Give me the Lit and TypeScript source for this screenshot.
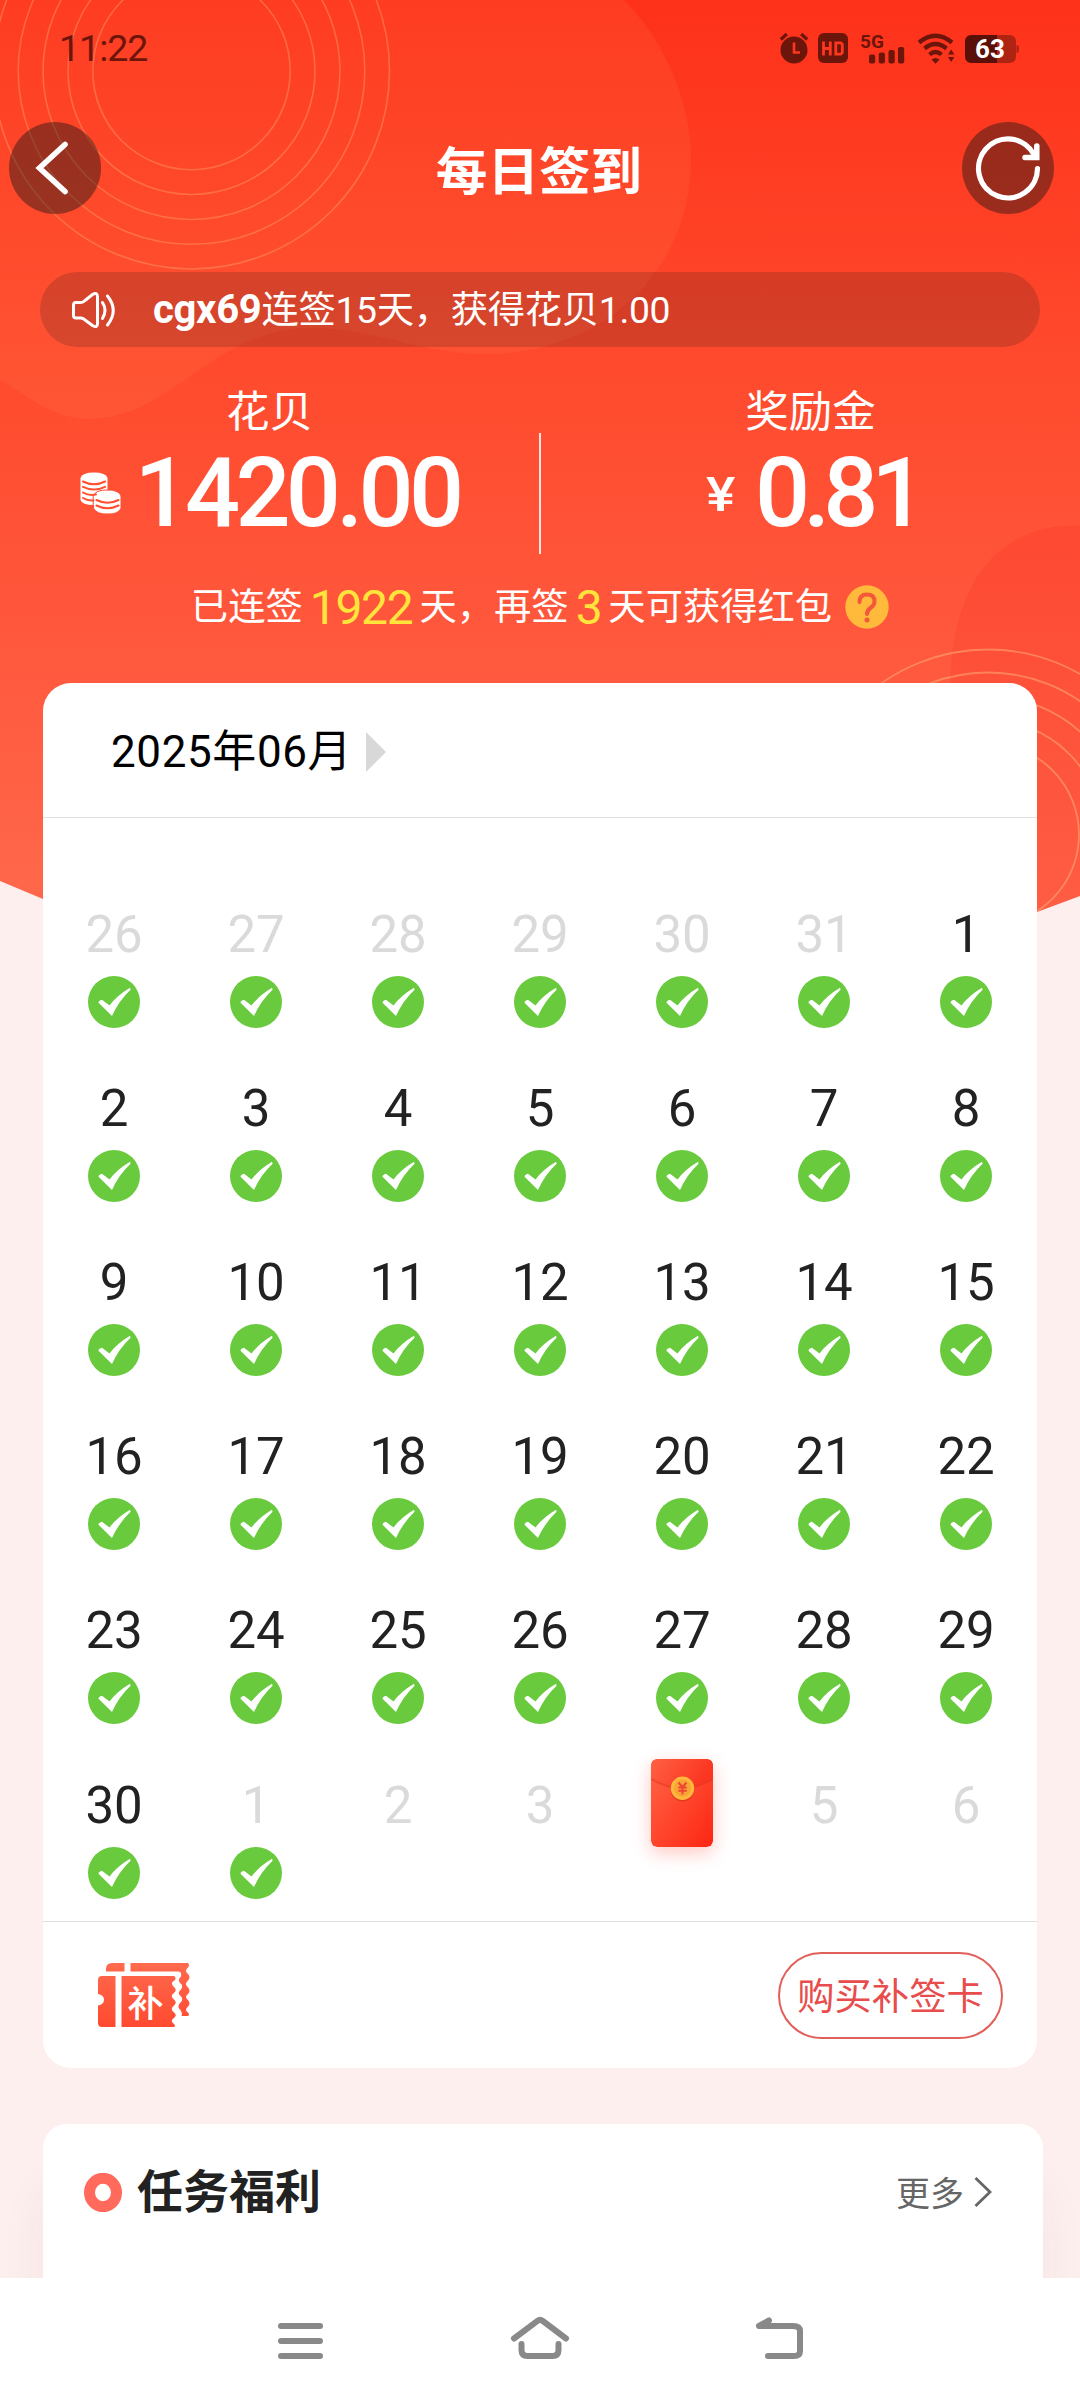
import { LitElement, html, css, svg } from "lit";
import { customElement, property } from "lit/decorators.js";
import { classMap } from "lit/directives/class-map.js";

interface Day {
  n: number;
  muted?: boolean;
  mark: "check" | "packet" | "none";
}

const days: Day[] = [
  ...[26, 27, 28, 29, 30, 31].map((n): Day => ({ n, muted: true, mark: "check" })),
  ...Array.from({ length: 30 }, (_, i): Day => ({ n: i + 1, mark: "check" })),
  { n: 1, muted: true, mark: "check" },
  { n: 2, muted: true, mark: "none" },
  { n: 3, muted: true, mark: "none" },
  { n: 4, muted: true, mark: "packet" },
  { n: 5, muted: true, mark: "none" },
  { n: 6, muted: true, mark: "none" },
];

const leftRings = [98.7, 123.5, 148.5, 173.3, 198];
const rightRings = [185, 162, 138, 114.5, 91];

@customElement("day-cell")
class DayCell extends LitElement {
  @property({ attribute: false }) day!: Day;

  static styles = css`
    :host {
      display: flex;
      flex-direction: column;
      align-items: center;
      gap: 11px;
    }
    .num {
      font: 400 51px/60px Roboto, sans-serif;
      color: #222;
      letter-spacing: -0.100px;
      padding-top: 2px;
    }
    .num.muted {
      color: #dadada;
    }
    .check {
      width: 52px;
      height: 52px;
      display: block;
    }
    .packet {
      width: 62px;
      height: 88px;
      margin-top: -15px;
      display: block;
      border-radius: 6px;
      box-shadow: 0 6px 18px rgba(255, 60, 40, 0.28);
    }
  `;

  render() {
    const d = this.day;
    if (d.mark === "packet") {
      return html`<svg class="packet" viewBox="0 0 62 88">
        <defs>
          <linearGradient id="pk" x1="0" y1="0" x2="1" y2="1">
            <stop offset="0" stop-color="#ff6547" />
            <stop offset="0.55" stop-color="#ff432a" />
            <stop offset="1" stop-color="#fc2512" />
          </linearGradient>
          <linearGradient id="fl" x1="0" y1="0" x2="1" y2="0.3">
            <stop offset="0" stop-color="#ff6144" />
            <stop offset="1" stop-color="#fb3520" />
          </linearGradient>
        </defs>
        <rect width="62" height="88" rx="6" fill="url(#pk)" />
        <path d="M0 21 Q31 39 62 21 V18 H0Z" fill="#d92a18" opacity="0.45" />
        <path d="M0 6 Q0 0 6 0 H56 Q62 0 62 6 V19 Q31 37 0 19Z" fill="url(#fl)" />
        <circle cx="31.5" cy="30.5" r="12" fill="#c8301a" opacity="0.5" />
        <circle cx="31.5" cy="29.2" r="11.7" fill="#ffb83c" />
        <circle cx="31.5" cy="29.2" r="8.6" fill="#f9a536" />
        <path d="M27.5 23.5l4 4.5 4-4.5M31.500 28v7.500M27.300 28.500h8.400M27.300 31.800h8.400" fill="none" stroke="#ee4430" stroke-width="1.900" />
      </svg>`;
    }
    return html`<span class=${classMap({ num: true, muted: !!d.muted })}>${d.n}</span>
      ${d.mark === "check"
        ? html`<svg class="check" viewBox="0 0 52 52">
            <circle cx="26" cy="26" r="26" fill="#68ca3c" />
            <path d="M10.500 26.800Q10.500 24.800 14 23.800L21.500 29.500Q29 19.500 42 11.800L42.600 13.800Q31 24.500 24 40Z" fill="#fff" />
          </svg>`
        : ""}`;
  }
}

@customElement("status-bar")
class StatusBar extends LitElement {
  static styles = css`
    :host {
      flex: none;
      box-sizing: border-box;
      display: flex;
      align-items: center;
      height: 96px;
      padding: 0 61px 0 59px;
      color: #6b150b;
      font-family: Roboto, sans-serif;
    }
    .time {
      flex: 1;
      font-size: 37.500px;
      line-height: 40px;
      letter-spacing: -1px;
    }
    svg {
      display: block;
      fill: currentColor;
      height: 32px;
      overflow: visible;
    }
    .icons {
      display: flex;
      align-items: center;
    }
    .alarm { width: 28px; margin-right: 10px; }
    .hd { width: 30px; margin-right: 12px; }
    .signal { width: 45px; margin-right: 12px; }
    .wifi { width: 38px; margin-right: 10px; }
    .battery { width: 54px; }
    .gen { font: 700 19px Roboto, sans-serif; }
    .level { font: 700 26px Roboto, sans-serif; fill: #fff; }
    .line { fill: none; stroke: currentColor; }
  `;
  render() {
    return html`
      <span class="time">11:22</span>
      <span class="icons">
        <svg class="alarm" viewBox="0 0 28 32">
          <circle cx="14" cy="18" r="13.500" />
          <path class="line" stroke-width="3.200" d="M0.800 7.500l6-5.500M27.200 7.500l-6-5.500" />
          <path d="M14 10.500v10h6" fill="none" stroke="#fe371e" stroke-width="2.600" />
        </svg>
        <svg class="hd" viewBox="0 0 30 32">
          <rect y="1" width="30" height="30" rx="6" />
          <path d="M5.500 9.500v14M12.300 9.500v14M5.500 16.500h6.800M17.800 10.800h5l1.500 1.500v8.400l-1.500 1.500h-5z" fill="none" stroke="#fe371e" stroke-width="2.800" />
        </svg>
        <svg class="signal" viewBox="0 0 45 32">
          <text class="gen" x="0" y="15.500">5G</text>
          <rect x="9" y="22.500" width="6.200" height="9" rx="2" />
          <rect x="18.700" y="20.500" width="6.200" height="11" rx="2" />
          <rect x="28.500" y="18" width="6.200" height="13.500" rx="2" />
          <rect x="38" y="15" width="6.200" height="16.500" rx="2" />
        </svg>
        <svg class="wifi" viewBox="0 0 38 32">
          <path class="line" stroke-width="4.200" d="M2 10.500 Q18.500 -3 35 10.500M7.500 16.500 Q18.500 7.500 29.500 16.500M12.500 22.500 Q18.500 17.500 24.500 22.500" />
          <path d="M14.500 27.500q4-3 8 0l-4 4.300zM31 22.500l3.200-5 3.200 5zM31 25l3.200 5 3.200-5z" />
        </svg>
        <svg class="battery" viewBox="0 0 54 32">
          <path d="M7 3h37q7 0 7 7v14q0 7-7 7H7q-7 0-7-7V10q0-7 7-7zM51.500 13q2.500 0 2.500 4t-2.500 4z" opacity="0.55" />
          <path d="M7 3h25v28H7q-7 0-7-7V10q0-7 7-7z" fill="#5a1009" />
          <text class="level" x="10" y="26">63</text>
        </svg>
      </span>
    `;
  }
}

@customElement("app-root")
class AppRoot extends LitElement {
  static styles = css`
    :host {
      display: block;
    }
    * {
      box-sizing: border-box;
    }
    .page {
      position: relative;
      width: 1080px;
      height: 2404px;
      overflow: hidden;
      background: #feefef;
      display: flex;
      flex-direction: column;
      font-family: Roboto, "Noto Sans CJK SC", sans-serif;
      color: #fff;
    }
    svg {
      display: block;
      flex: none;
    }
    .backdrop {
      position: absolute;
      left: 0;
      top: 0;
    }
    .content {
      position: relative;
      flex: 1;
      min-height: 0;
      overflow: hidden;
      display: flex;
      flex-direction: column;
    }
    .titlebar {
      height: 144px;
      flex: none;
      display: flex;
      align-items: center;
      justify-content: space-between;
      padding: 0 26px 0 9px;
    }
    .title {
      margin: 0;
      font: 700 51.600px/60px "Noto Sans CJK SC", sans-serif;
      padding-left: 15px;
    }
    .round {
      width: 92px;
      height: 92px;
      border-radius: 50%;
      background: rgba(20, 20, 20, 0.43);
    }
    .notice {
      flex: none;
      margin: 32px 40px 0;
      height: 75px;
      border-radius: 38px;
      background: rgba(30, 20, 20, 0.18);
      display: flex;
      align-items: center;
      padding-left: 31px;
      line-height: 50px;
    }
    .notice-text {
      margin-left: 36px;
      white-space: nowrap;
      font-size: 37.300px;
      letter-spacing: -0.300px;
    }
    .notice-text b {
      font-family: Roboto, sans-serif;
      font-size: 40px;
      letter-spacing: -0.300px;
    }
    .stats {
      flex: none;
      height: 216px;
      display: flex;
      padding-top: 38px;
    }
    .stat {
      flex: 1;
      display: flex;
      flex-direction: column;
      align-items: center;
    }
    .stat-name {
      font-size: 43.500px;
      line-height: 52px;
      padding-top: 2px;
      margin-bottom: 11px;
    }
    .stat-row {
      display: flex;
      align-items: center;
      height: 86px;
    }
    .amount {
      font: 500 97px/86px Roboto, sans-serif;
      letter-spacing: -4.700px;
    }
    .reward {
      letter-spacing: -7px;
    }
    .coins {
      margin-right: 14px;
    }
    .yen {
      font: 500 48px/60px Roboto, sans-serif;
      display: inline-block;
      transform: scaleX(1.150);
      margin: 4px 22px 0 6px;
    }
    .rule {
      width: 2px;
      height: 121px;
      margin-top: 48px;
      background: rgba(255, 255, 255, 0.85);
    }
    .streak {
      flex: none;
      height: 88px;
      display: flex;
      align-items: center;
      justify-content: center;
      font-size: 37.300px;
      line-height: 50px;
      white-space: nowrap;
    }
    .hl {
      color: #ffe53b;
      font: 400 48px/50px Roboto, sans-serif;
      letter-spacing: -1.300px;
      padding-top: 2px;
      margin: 0 7px;
    }
    .help {
      margin-left: 13px;
    }
    .calendar {
      flex: none;
      width: 994px;
      height: 1385px;
      margin: 32px 0 0 43px;
      background: #fff;
      border-radius: 28px;
      display: flex;
      flex-direction: column;
      color: #000;
    }
    .cal-head {
      height: 135px;
      border-bottom: 1px solid #e2e2e2;
      display: flex;
      align-items: center;
      padding: 4px 0 0 68px;
      font-size: 44px;
      letter-spacing: 0.600px;
      line-height: 60px;
    }
    .tri {
      margin-left: 14px;
    }
    .grid {
      height: 1104px;
      padding-top: 84.700px;
      display: grid;
      grid-template-columns: repeat(7, 142px);
      grid-auto-rows: 146.200px;
      row-gap: 28px;
      border-bottom: 1px solid #dfdfdf;
    }
    .cal-foot {
      flex: 1;
      display: flex;
      align-items: center;
      justify-content: space-between;
      padding: 0 34px 0 55px;
    }
    .buy {
      width: 225px;
      height: 87px;
      border: 2px solid #e2605a;
      border-radius: 44px;
      background: none;
      color: #e84c4c;
      font: 400 37.300px/50px "Noto Sans CJK SC", sans-serif;
      padding: 0 0 3px;
      white-space: nowrap;
    }
    .tasks {
      flex: none;
      width: 1000px;
      height: 300px;
      margin: 56px 0 0 43px;
      background: #fff;
      border-radius: 24px;
      box-shadow: 0 60px 50px rgba(60, 20, 20, 0.05);
      display: flex;
      align-items: flex-start;
      padding: 34px 51px 0 41px;
      font-family: "Noto Sans CJK SC", sans-serif;
    }
    .ring {
      margin-top: 15px;
    }
    .tasks-title {
      flex: 1;
      margin: 0 0 0 15px;
      font-size: 46px;
      font-weight: 700;
      line-height: 60px;
      color: #222;
    }
    .more {
      display: flex;
      align-items: center;
      gap: 10px;
      margin-top: 4px;
      font-size: 34px;
      line-height: 60px;
      color: #666;
    }
    .nav {
      position: relative;
      flex: none;
      height: 126px;
      background: #fff;
      display: flex;
      align-items: center;
      justify-content: center;
      gap: 182px;
      color: #898989;
    }
    .nav svg {
      overflow: visible;
      fill: none;
      stroke: currentColor;
      stroke-width: 6;
      stroke-linecap: round;
      stroke-linejoin: round;
    }
  `;

  private backdrop() {
    return html`<svg class="backdrop" width="1080" height="920" viewBox="0 0 1080 920">
      <defs>
        <linearGradient id="bg" x1="0" y1="0" x2="0" y2="1">
          <stop offset="0" stop-color="#fe311a" />
          <stop offset="0.400" stop-color="#ff4a2d" />
          <stop offset="0.700" stop-color="#ff583d" />
          <stop offset="1" stop-color="#ff694c" />
        </linearGradient>
        <clipPath id="shape"><path d="M0 0H1080V896L1037 912Q540 1080 43 899L0 881Z" /></clipPath>
      </defs>
      <g clip-path="url(#shape)">
        <rect width="1080" height="920" fill="url(#bg)" />
        <path d="M0 0H624C668 45 691 105 691 160C691 265 610 354 485 354C420 354 375 328 310 328C215 328 170 419 90 419C50 419 25 393 0 380Z" fill="#ffb070" opacity="0.090" />
        <path d="M1080 526C1010 522 950 570 950 690V920H1080Z" fill="#f80a10" opacity="0.110" />
        <g fill="none" stroke="#ffc080" stroke-width="1.600" opacity="0.320">
          ${leftRings.map((r) => svg`<circle cx="191.500" cy="71" r=${r} />`)}
        </g>
        <g fill="none" stroke="#ffc080" stroke-width="1.800" opacity="0.450">
          ${rightRings.map((r) => svg`<circle cx="988" cy="834.500" r=${r} />`)}
        </g>
      </g>
    </svg>`;
  }

  private ticket() {
    return html`<svg width="92" height="64" viewBox="0 0 92 64">
      <defs>
        <linearGradient id="tk" x1="0" y1="0" x2="0" y2="64" gradientUnits="userSpaceOnUse">
          <stop offset="0" stop-color="#ff6a4e" />
          <stop offset="1" stop-color="#ff4a30" />
        </linearGradient>
      </defs>
      <g fill="url(#tk)">
        <path d="M8 8.500V6Q8 0 14 0H26.500V8.500ZM32.500 0H90Q92 2 90 4.500Q86 8 90 11Q93 14 90 17.500Q86 21 90 24.500Q93 27.500 90 31Q86 34 90 37Q93 40.500 90 43.500Q86 47 90 49.500Q92 52 90 53H83.500Q85 49 81.500 46Q79 43 82.500 39.500Q86 36 82.500 33Q79 30 82.500 27Q86 23 82.500 20.500Q79 17 83 13.500Q84 8.500 80 8.500H32.500Z" />
        <path d="M0 17Q0 13 4 13H17.500V64H4Q0 64 0 60V42.500Q6 41.500 6 36.800Q6 32 0 31ZM23.500 13H76Q79 15 76.500 17.500Q71.500 20 76 24Q79.500 27 76 30Q71.500 33 76 36.500Q79.500 39.500 76 42.500Q71.500 46 76 49.500Q79.500 52 76 55Q71.500 58 76 61Q78 63 76 64H23.500Z" />
      </g>
      <text x="29.500" y="53.500" font-size="36" font-weight="500" fill="#fff" font-family="Noto Sans CJK SC, sans-serif">补</text>
    </svg>`;
  }

  render() {
    return html`<div class="page">
      ${this.backdrop()}
      <div class="content">
        <status-bar></status-bar>
        <header class="titlebar">
          <svg class="round" viewBox="0 0 92 92">
            <path d="M56 22.500L30.500 46L56 69.500" fill="none" stroke="#fff" stroke-width="5.600" stroke-linecap="round" />
          </svg>
          <h1 class="title">每日签到</h1>
          <svg class="round" viewBox="0 0 92 92">
            <g fill="none" stroke="#fff" stroke-width="5.200" stroke-linecap="round">
              <path d="M75.500 46.500A29.500 29.500 0 1 1 72 32.500L73.500 35" />
              <path d="M74.800 24V35.500H63" stroke-width="5.500" />
            </g>
          </svg>
        </header>

        <div class="notice">
          <svg width="46" height="38" viewBox="0 0 46 38" fill="none" stroke="#fff" stroke-width="3" stroke-linecap="round" stroke-linejoin="round">
            <path d="M5 11.500H10Q12 11.500 14 9.500L21.500 3.500Q26.500 0.500 26.500 6V32.500Q26.500 37.500 21.500 34.500L14 29Q12 27 10 27H5Q2.500 27 2.500 24.500V14Q2.500 11.500 5 11.500Z" />
            <path d="M31.500 11.500Q36.500 19 31.500 27.500M36.500 5Q48 19.500 36.500 34" />
          </svg>
          <span class="notice-text"><b>cgx69</b>连签15天，获得花贝1.00</span>
        </div>

        <section class="stats">
          <div class="stat">
            <span class="stat-name">花贝</span>
            <span class="stat-row">
              <svg class="coins" width="41" height="42" viewBox="0 0 41 42">
                <g fill="#fff">
                  <path d="M0.500 6Q2 0.500 14 0.500T27.500 6V20Q15 21 14 33Q2 33 0.500 28Z" />
                  <path d="M14 24Q16 18.500 27.500 18.500T40.500 24V36Q39 41.500 27.500 41.500T14 36Z" />
                </g>
                <path d="M3 9.500Q14 15 25 9.500M3 14.800Q14 20.300 25 14.800M3 20.500Q9 24 16 22.500M3 26Q8 29 13.500 28.500M16.500 28Q27.500 33.500 38.500 28M16.500 33.500Q27.500 39 38.500 33.500" fill="none" stroke="#ff4f33" stroke-width="2" stroke-linecap="round" />
                <path d="M13.200 33V24Q15.500 17.700 28 18" fill="none" stroke="#ff4f33" stroke-width="1" />
              </svg>
              <span class="amount">1420.00</span>
            </span>
          </div>
          <div class="rule"></div>
          <div class="stat">
            <span class="stat-name">奖励金</span>
            <span class="stat-row"><span class="yen">¥</span><span class="amount reward">0.81</span></span>
          </div>
        </section>

        <div class="streak">
          <span>已连签</span><span class="hl">1922</span><span>天，再签</span><span class="hl">3</span><span>天可获得红包</span>
          <svg class="help" width="44" height="44" viewBox="0 0 44 44">
            <circle cx="22" cy="22" r="21.700" fill="#ffba3b" />
            <path d="M14.500 17Q14.500 9.500 22 9.500T29.500 16.500Q29.500 20 26 22.500Q22 25 22 29" fill="none" stroke="#f4573a" stroke-width="4" stroke-linecap="round" />
            <circle cx="22" cy="35" r="2.500" fill="#f4573a" />
          </svg>
        </div>

        <section class="calendar">
          <div class="cal-head">
            <span>2025年06月</span>
            <svg class="tri" width="20" height="40" viewBox="0 0 20 40"><path d="M0 0L20 20L0 40Z" fill="#d8d8d8" /></svg>
          </div>
          <div class="grid">${days.map((d) => html`<day-cell .day=${d}></day-cell>`)}</div>
          <div class="cal-foot">
            ${this.ticket()}
            <button class="buy">购买补签卡</button>
          </div>
        </section>

        <section class="tasks">
          <svg class="ring" width="38" height="39" viewBox="0 0 38 39">
            <ellipse cx="19" cy="19.500" rx="13.500" ry="14.200" fill="none" stroke="#ff6a5c" stroke-width="11" />
          </svg>
          <h2 class="tasks-title">任务福利</h2>
          <span class="more">更多
            <svg width="18" height="30" viewBox="0 0 18 30"><path d="M1.500 1L16 15L1.500 29" fill="none" stroke="#666" stroke-width="2.800" /></svg>
          </span>
        </section>
      </div>

      <nav class="nav">
        <svg width="58" height="46" viewBox="0 0 58 46"><path d="M10 8H49M10 23H49M10 38H49" /></svg>
        <svg width="58" height="46" viewBox="0 0 58 46">
          <path d="M3 20.500L26.500 2.800Q29 1 31.500 2.800L55 20.500M10.500 26V32Q10.500 38 16.500 38H41.500Q47.500 38 47.500 32V26" />
        </svg>
        <svg width="58" height="46" viewBox="0 0 58 46">
          <path d="M18 2.500L8 8H42Q49 8 49 13V33Q49 38 43 38H17" />
        </svg>
      </nav>
    </div>`;
  }
}
